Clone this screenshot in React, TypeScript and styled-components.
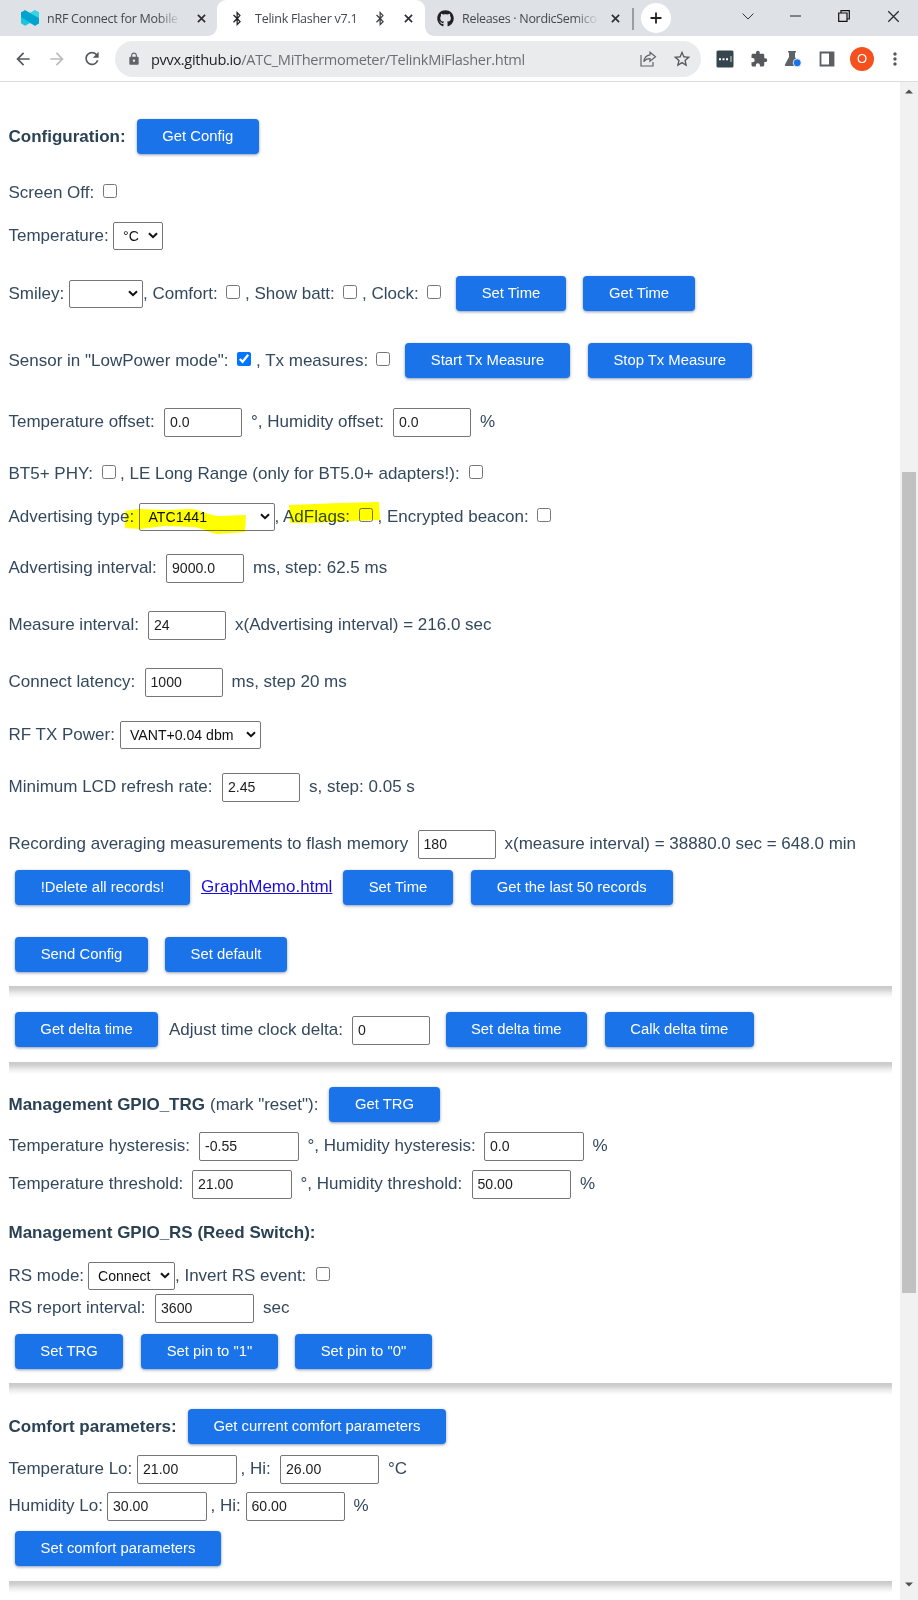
import React from "react";
import styled, { createGlobalStyle } from "styled-components";
import { FaGithub, FaBluetoothB } from "react-icons/fa";
import { MdLock, MdStarBorder, MdExtension, MdMoreVert, MdRefresh, MdArrowBack, MdArrowForward } from "react-icons/md";

const GlobalStyle = createGlobalStyle`
  * { box-sizing: border-box; }
  body { margin: 0; background: #fff; overflow: hidden; }
`;

const Window = styled.div`
  width: 918px;
  height: 1600px;
  display: flex;
  flex-direction: column;
  overflow: hidden;
  background: #fff;
  font-family: "Liberation Sans", Arial, sans-serif;
`;

/* ---------- browser chrome ---------- */

const TabStrip = styled.div`
  display: flex;
  height: 36px;
  flex: none;
  background: #dee1e6;
  font-family: "Open Sans", "Noto Sans", sans-serif;
  font-size: 12.5px;
  color: #45494d;
`;

const Tab = styled.div<{ $w: number; $pad: number; $active?: boolean }>`
  position: relative;
  display: flex;
  align-items: center;
  width: ${(p) => p.$w}px;
  height: 36px;
  padding-left: ${(p) => p.$pad}px;
  background: ${(p) => (p.$active ? "#fff" : "transparent")};
  border-radius: 9px 9px 0 0;
  ${(p) =>
    p.$active &&
    `&::before, &::after {
      content: "";
      position: absolute;
      bottom: 0;
      width: 9px;
      height: 9px;
    }
    &::before { left: -9px; background: radial-gradient(circle at 0 0, #dee1e6 8.5px, #fff 9px); }
    &::after { right: -9px; background: radial-gradient(circle at 100% 0, #dee1e6 8.5px, #fff 9px); }`}
`;

const TabTitle = styled.span<{ $w: number; $ml: number; $fade?: boolean; $ls?: number }>`
  flex: none;
  width: ${(p) => p.$w}px;
  margin-left: ${(p) => p.$ml}px;
  white-space: nowrap;
  letter-spacing: ${(p) => p.$ls ?? -0.25}px;
  ${(p) => p.$fade && "-webkit-mask-image: linear-gradient(90deg, #000 82%, transparent);"}
`;

const Slot = styled.span<{ $w: number; $ml?: number; $color?: string }>`
  display: flex;
  flex: none;
  align-items: center;
  justify-content: center;
  width: ${(p) => p.$w}px;
  margin-left: ${(p) => p.$ml ?? 0}px;
  color: ${(p) => p.$color ?? "#202124"};
`;

const Separator = styled.span`
  width: 1.5px;
  height: 22px;
  margin: 8px 0 0 7px;
  background: #9a9da1;
`;

const NewTab = styled.span`
  display: flex;
  align-items: center;
  justify-content: center;
  width: 30px;
  height: 30px;
  margin: 3px 0 0 7px;
  border-radius: 50%;
  background: #fff;
`;

const WindowControls = styled.div`
  display: flex;
  align-items: center;
  height: 32px;
  margin-left: 53px;
`;

const Toolbar = styled.div`
  display: flex;
  align-items: center;
  flex: none;
  height: 46px;
  padding: 1px 0 1px;
  border-bottom: 1px solid #dcdde0;
  background: #fff;
`;

const AddressBar = styled.div`
  display: flex;
  align-items: center;
  width: 586px;
  height: 36px;
  margin-left: 13px;
  padding-left: 11px;
  border-radius: 18px;
  background: #e9ebec;
  font-family: "Open Sans", "Noto Sans", sans-serif;
  font-size: 14.6px;
  letter-spacing: -0.33px;
  color: #6b6f73;
`;

const Url = styled.span`
  width: 486px;
  margin-left: 9px;
  white-space: nowrap;
  b { font-weight: 400; color: #222427; }
`;

const Avatar = styled.span`
  display: flex;
  align-items: center;
  justify-content: center;
  width: 24px;
  height: 24px;
  margin-left: 14px;
  border-radius: 50%;
  background: #f4511e;
  color: #fff;
  font-size: 13px;
`;

/* ---------- page ---------- */

const Viewport = styled.div`
  display: flex;
  flex: 1;
  min-height: 0;
`;

const Page = styled.main`
  flex: 1;
  padding: 40px 8px 0 8.5px;
  overflow: hidden;
`;

const Row = styled.div<{ $mt?: number; $indent?: boolean }>`
  position: relative;
  display: flex;
  align-items: center;
  height: 28px;
  margin-top: ${(p) => p.$mt ?? 0}px;
  padding-left: ${(p) => (p.$indent ? 6.5 : 0)}px;
  white-space: nowrap;
  font-size: 17px;
  line-height: 20px;
  color: #34495e;
`;

const Label = styled.span<{ $w?: number; $ml?: number; $bold?: boolean }>`
  flex: none;
  ${(p) => p.$w && `width: ${p.$w}px;`}
  margin-left: ${(p) => p.$ml ?? 0}px;
  margin-top: 1px;
  ${(p) => p.$bold && "font-weight: 700; color: #2a4254;"}
`;

const Button = styled.button<{ $w: number; $ml?: number }>`
  flex: none;
  width: ${(p) => p.$w}px;
  height: 35px;
  margin: 1px 0 0 ${(p) => p.$ml ?? 0}px;
  padding: 0 0 1px;
  border: 0;
  border-radius: 4px;
  background: #1a73e8;
  box-shadow: 0 1px 3px rgba(0, 30, 90, 0.45);
  color: #fff;
  font: 14.83px "Liberation Sans", Arial, sans-serif;
  white-space: nowrap;
`;

const Field = styled.input<{ $w?: number }>`
  flex: none;
  width: ${(p) => p.$w ?? 78}px;
  height: 29px;
  margin: 3px 0 0;
  padding: 0 5px 2px;
  border: 1px solid #767676;
  border-radius: 2px;
  background: #fff;
  color: #1c1c1c;
  font: 14.1px "Liberation Sans", Arial, sans-serif;
`;

const SelectBox = styled.span<{ $w: number }>`
  display: flex;
  align-items: center;
  justify-content: space-between;
  flex: none;
  width: ${(p) => p.$w}px;
  height: 28px;
  margin-top: 1px;
  padding: 0 4px 0 9px;
  border: 1px solid #767676;
  border-radius: 2px;
  background: #fff;
  color: #111;
  font-size: 14.1px;
`;

const Check = styled.input.attrs({ type: "checkbox" })`
  flex: none;
  width: 14px;
  height: 14px;
  margin: 0 0 3px;
`;

const Link = styled.a`
  margin-left: 11px;
  width: 142px;
  color: #1a0dd8;
  text-decoration: underline;
`;

const Divider = styled.div<{ $mt: number }>`
  height: 12px;
  width: 883.5px;
  margin-top: ${(p) => p.$mt}px;
  background: linear-gradient(#c9c9c9, #d0d0d0 25%, #ececec 60%, #fff);
`;

const Marker = styled.svg`
  position: absolute;
  left: 0;
  top: -4px;
  mix-blend-mode: multiply;
`;

const ScrollTrack = styled.div`
  display: flex;
  flex-direction: column;
  align-items: center;
  width: 18px;
  padding: 7px 0 13px;
  background: #f1f1f1;
`;

const ScrollThumb = styled.div`
  width: 14px;
  height: 821px;
  margin: 378px 0 auto;
  background: #c1c1c1;
`;

const Cross = ({ size = 9, stroke = 1.8 }: { size?: number; stroke?: number }) => (
  <svg width={size} height={size} viewBox="0 0 10 10">
    <path d="M1 1 9 9M9 1 1 9" stroke="#2b2d30" strokeWidth={stroke} fill="none" />
  </svg>
);

const Select = ({ w, value }: { w: number; value: string }) => (
  <SelectBox $w={w}>
    <span>{value}</span>
    <svg width="10" height="7" viewBox="0 0 10 7">
      <path d="M1 1.2 5 5.2 9 1.2" stroke="#111" strokeWidth="2" fill="none" />
    </svg>
  </SelectBox>
);

const Input = ({ value, w }: { value: string; w?: number }) => <Field $w={w} defaultValue={value} />;

const Tabs = () => (
  <TabStrip>
    <Tab $w={217} $pad={21}>
      <svg width="18" height="16" viewBox="0 0 18 16">
        <path d="M0 2.5 4 .3 9 3 14 .3 18 2.5V13.2L14 15.7 9 13 4 15.7 0 13.2Z" fill="#19c5df" />
        <path d="M0 2.5 4 .3 18 8V13.2L14 15.7 0 7Z" fill="#00a4cf" />
        <path d="M9 3 14 .3 18 2.5V8Z" fill="#38d3e6" />
      </svg>
      <TabTitle $w={134} $ml={8} $fade>nRF Connect for Mobile</TabTitle>
      <Slot $w={10} $ml={15}><Cross /></Slot>
    </Tab>
    <Tab $w={208} $pad={13} $active>
      <Slot $w={14}><FaBluetoothB size={15} /></Slot>
      <TabTitle $w={110} $ml={11}>Telink Flasher v7.1</TabTitle>
      <Slot $w={14} $ml={8} $color="#3c4043"><FaBluetoothB size={15} /></Slot>
      <Slot $w={10} $ml={16}><Cross /></Slot>
    </Tab>
    <Tab $w={200} $pad={12}>
      <Slot $w={17}><FaGithub size={17} /></Slot>
      <TabTitle $w={137} $ml={8} $fade $ls={-0.3}>Releases · NordicSemico</TabTitle>
      <Slot $w={10} $ml={11}><Cross /></Slot>
    </Tab>
    <Separator />
    <NewTab>
      <svg width="12" height="12" viewBox="0 0 12 12">
        <path d="M6 .5V11.5M.5 6H11.5" stroke="#222" strokeWidth="1.8" />
      </svg>
    </NewTab>
    <WindowControls>
      <Slot $w={48}>
        <svg width="12" height="7" viewBox="0 0 12 7"><path d="M.6.6 6 6 11.4.6" stroke="#333" fill="none" /></svg>
      </Slot>
      <Slot $w={48}>
        <svg width="11" height="2" viewBox="0 0 11 2"><path d="M0 1H11" stroke="#222" /></svg>
      </Slot>
      <Slot $w={49}>
        <svg width="12" height="12" viewBox="0 0 12 12">
          <path d="M.7 3H9V11.3H.7ZM3 3V.7H11.3V9H9" stroke="#111" strokeWidth="1.2" fill="none" />
        </svg>
      </Slot>
      <Slot $w={49}><Cross size={13} stroke={1} /></Slot>
    </WindowControls>
  </TabStrip>
);

const BrowserBar = () => (
  <Toolbar>
    <Slot $w={20} $ml={13} $color="#55595d"><MdArrowBack size={20} /></Slot>
    <Slot $w={20} $ml={14} $color="#babcbe"><MdArrowForward size={20} /></Slot>
    <Slot $w={20} $ml={15} $color="#55595d"><MdRefresh size={21} /></Slot>
    <AddressBar>
      <Slot $w={16} $color="#5f6368"><MdLock size={14} /></Slot>
      <Url><b>pvvx.github.io</b>/ATC_MiThermometer/TelinkMiFlasher.html</Url>
      <Slot $w={18} $ml={2}>
        <svg width="17" height="16" viewBox="0 0 17 16">
          <path d="M1 4V15H13V11M10 1.2 15.5 5.7 10 10.2V7.6C7 7.6 5.2 8.4 3.8 10.8 4.2 6.6 6.5 4.4 10 3.9Z" stroke="#606468" strokeWidth="1.2" fill="none" />
        </svg>
      </Slot>
      <Slot $w={20} $ml={15} $color="#55595d"><MdStarBorder size={20} /></Slot>
    </AddressBar>
    <Slot $w={18} $ml={15}>
      <svg width="18" height="18" viewBox="0 0 18 18">
        <rect x=".5" y=".5" width="17" height="17" rx="1.5" fill="#35464f" />
        <path d="M3 9.2H5M6.5 9.2H8.5M10 9.2H12" stroke="#fff" strokeWidth="2" />
        <path d="M15 6V12" stroke="#cfd6da" />
      </svg>
    </Slot>
    <Slot $w={20} $ml={15} $color="#55595d"><MdExtension size={18} /></Slot>
    <Slot $w={18} $ml={15}>
      <svg width="18" height="17" viewBox="0 0 18 17">
        <path d="M4 1H12V2.5H11V7L15 14.5C15.4 15.3 15 16 14 16H2C1 16 .6 15.3 1 14.5L5 7V2.5H4Z" fill="#5f6368" />
        <circle cx="13.2" cy="12.8" r="4" fill="#1a73e8" stroke="#fff" strokeWidth=".8" />
      </svg>
    </Slot>
    <Slot $w={18} $ml={16}>
      <svg width="16" height="16" viewBox="0 0 16 16">
        <path d="M1.5 1.5H14.5V14.5H1.5Z" stroke="#5b5f63" strokeWidth="1.8" fill="none" />
        <path d="M10 1H15V15H10Z" fill="#5b5f63" />
      </svg>
    </Slot>
    <Avatar>O</Avatar>
    <Slot $w={20} $ml={11} $color="#55595d"><MdMoreVert size={20} /></Slot>
  </Toolbar>
);

export default function App() {
  return (
    <Window>
      <GlobalStyle />
      <Tabs />
      <BrowserBar />
      <Viewport>
        <Page>
          <Row>
            <Label $w={128.5} $bold>Configuration:</Label>
            <Button $w={121.5}>Get Config</Button>
          </Row>
          <Row $mt={28}>
            <Label $w={94.5}>Screen Off:</Label>
            <Check />
          </Row>
          <Row $mt={15}>
            <Label $w={104.5}>Temperature:</Label>
            <Select w={49.5} value="°C" />
          </Row>
          <Row $mt={30}>
            <Label $w={60.5}>Smiley:</Label>
            <Select w={74} value="" />
            <Label $w={83}>, Comfort:</Label>
            <Check />
            <Label $w={98} $ml={5}>, Show batt:</Label>
            <Check />
            <Label $w={65} $ml={5}>, Clock:</Label>
            <Check />
            <Button $w={110} $ml={15}>Set Time</Button>
            <Button $w={112} $ml={17}>Get Time</Button>
          </Row>
          <Row $mt={39}>
            <Label $w={228.5}>Sensor in "LowPower mode":</Label>
            <Check defaultChecked />
            <Label $w={120} $ml={5}>, Tx measures:</Label>
            <Check />
            <Button $w={165} $ml={15}>Start Tx Measure</Button>
            <Button $w={164.5} $ml={17.5}>Stop Tx Measure</Button>
          </Row>
          <Row $mt={33}>
            <Label $w={155.5}>Temperature offset:</Label>
            <Input value="0.0" />
            <Label $w={142} $ml={9}>°, Humidity offset:</Label>
            <Input value="0.0" />
            <Label $ml={9}>%</Label>
          </Row>
          <Row $mt={24}>
            <Label $w={93}>BT5+ PHY:</Label>
            <Check />
            <Label $w={348.5} $ml={4.5}>, LE Long Range (only for BT5.0+ adapters!):</Label>
            <Check />
          </Row>
          <Row $mt={15}>
            <Label $w={130}>Advertising type:</Label>
            <Select w={136} value="ATC1441" />
            <Label $w={84}>, AdFlags:</Label>
            <Check />
            <Label $w={159.5} $ml={5}>, Encrypted beacon:</Label>
            <Check />
            <Marker width="380" height="40" viewBox="9 498 380 40">
              <path d="M125 511 138 509 165 510 190 509C204 510 208 516 220 516L246 515 245 532 218 534C207 533 203 527 191 527L165 526 140 529 125 528Z" fill="#ffff00" />
              <path d="M289 505 340 503 379 502 380 520 350 521 310 523 290 523Z" fill="#ffff00" />
            </Marker>
          </Row>
          <Row $mt={23}>
            <Label $w={157.5}>Advertising interval:</Label>
            <Input value="9000.0" />
            <Label $ml={9}>ms, step: 62.5 ms</Label>
          </Row>
          <Row $mt={29}>
            <Label $w={139.5}>Measure interval:</Label>
            <Input value="24" />
            <Label $ml={9}>x(Advertising interval) = 216.0 sec</Label>
          </Row>
          <Row $mt={29}>
            <Label $w={136}>Connect latency:</Label>
            <Input value="1000" />
            <Label $ml={9}>ms, step 20 ms</Label>
          </Row>
          <Row $mt={25}>
            <Label $w={111.5}>RF TX Power:</Label>
            <Select w={141} value="VANT+0.04 dbm" />
          </Row>
          <Row $mt={24}>
            <Label $w={213.5}>Minimum LCD refresh rate:</Label>
            <Input value="2.45" />
            <Label $ml={9}>s, step: 0.05 s</Label>
          </Row>
          <Row $mt={29}>
            <Label $w={409}>Recording averaging measurements to flash memory</Label>
            <Input value="180" />
            <Label $ml={9}>x(measure interval) = 38880.0 sec = 648.0 min</Label>
          </Row>
          <Row $mt={16} $indent>
            <Button $w={175}>!Delete all records!</Button>
            <Link href="#">GraphMemo.html</Link>
            <Button $w={110}>Set Time</Button>
            <Button $w={201.5} $ml={18}>Get the last 50 records</Button>
          </Row>
          <Row $mt={39} $indent>
            <Button $w={133}>Send Config</Button>
            <Button $w={122} $ml={17}>Set default</Button>
          </Row>
          <Divider $mt={18} />
          <Row $mt={17} $indent>
            <Button $w={143}>Get delta time</Button>
            <Label $w={183} $ml={11}>Adjust time clock delta:</Label>
            <Input value="0" />
            <Button $w={141.5} $ml={15.5}>Set delta time</Button>
            <Button $w={149.5} $ml={17.5}>Calk delta time</Button>
          </Row>
          <Divider $mt={19} />
          <Row $mt={16}>
            <Label $w={201.5} $bold>Management GPIO_TRG</Label>
            <Label $w={119}>(mark "reset"):</Label>
            <Button $w={111}>Get TRG</Button>
          </Row>
          <Row $mt={13}>
            <Label $w={190.5}>Temperature hysteresis:</Label>
            <Input w={99.5} value="-0.55" />
            <Label $w={176.5} $ml={9}>°, Humidity hysteresis:</Label>
            <Input w={99.5} value="0.0" />
            <Label $ml={9}>%</Label>
          </Row>
          <Row $mt={10}>
            <Label $w={183.5}>Temperature threshold:</Label>
            <Input w={99.5} value="21.00" />
            <Label $w={171} $ml={9}>°, Humidity threshold:</Label>
            <Input w={99.5} value="50.00" />
            <Label $ml={9}>%</Label>
          </Row>
          <Row $mt={21}>
            <Label $bold>Management GPIO_RS (Reed Switch):</Label>
          </Row>
          <Row $mt={15}>
            <Label $w={79.5}>RS mode:</Label>
            <Select w={87} value="Connect" />
            <Label $w={140.5}>, Invert RS event:</Label>
            <Check />
          </Row>
          <Row $mt={4}>
            <Label $w={146.5}>RS report interval:</Label>
            <Input w={99} value="3600" />
            <Label $ml={9}>sec</Label>
          </Row>
          <Row $mt={16} $indent>
            <Button $w={108}>Set TRG</Button>
            <Button $w={137} $ml={18}>Set pin to "1"</Button>
            <Button $w={137} $ml={17}>Set pin to "0"</Button>
          </Row>
          <Divider $mt={18} />
          <Row $mt={17}>
            <Label $w={179.5} $bold>Comfort parameters:</Label>
            <Button $w={258}>Get current comfort parameters</Button>
          </Row>
          <Row $mt={14}>
            <Label $w={128.5}>Temperature Lo:</Label>
            <Input w={99.5} value="21.00" />
            <Label $w={39.5} $ml={4}>, Hi:</Label>
            <Input w={99} value="26.00" />
            <Label $ml={9}>°C</Label>
          </Row>
          <Row $mt={9}>
            <Label $w={98.5}>Humidity Lo:</Label>
            <Input w={99.5} value="30.00" />
            <Label $w={35} $ml={4}>, Hi:</Label>
            <Input w={99} value="60.00" />
            <Label $ml={9}>%</Label>
          </Row>
          <Row $mt={15} $indent>
            <Button $w={206}>Set comfort parameters</Button>
          </Row>
          <Divider $mt={19} />
        </Page>
        <ScrollTrack>
          <svg width="8" height="5" viewBox="0 0 8 5"><path d="M0 4.5 4 .5 8 4.5Z" fill="#505050" /></svg>
          <ScrollThumb />
          <svg width="8" height="5" viewBox="0 0 8 5"><path d="M0 .5 4 4.5 8 .5Z" fill="#505050" /></svg>
        </ScrollTrack>
      </Viewport>
    </Window>
  );
}
